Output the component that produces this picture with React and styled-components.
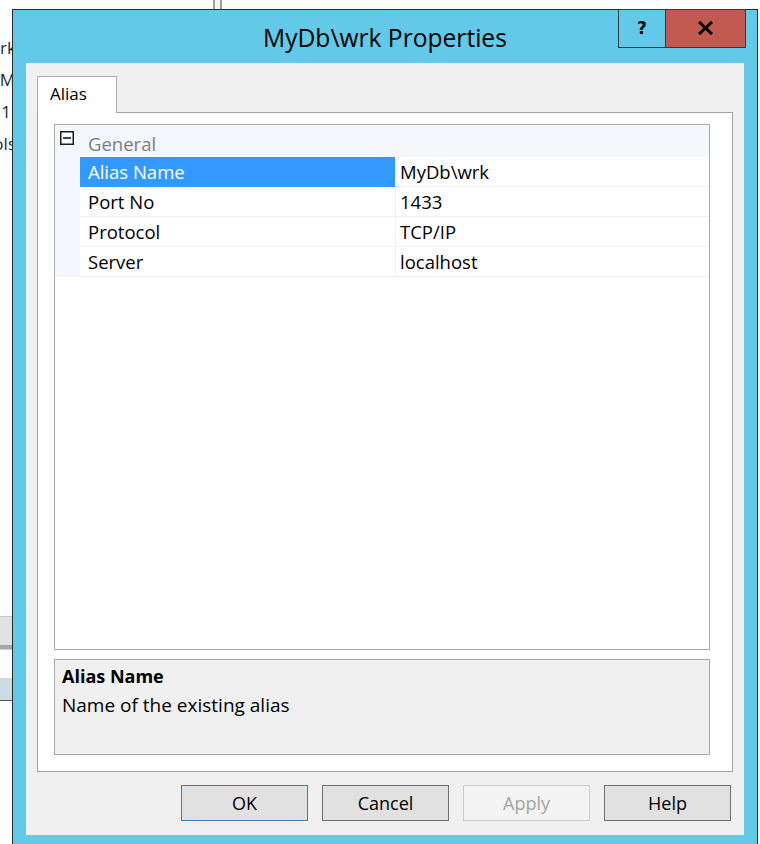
import React from "react";
import styled, { createGlobalStyle } from "styled-components";

const GlobalStyle = createGlobalStyle`
    body {
        margin: 0;
        background: #ffffff;
        font-family: "Open Sans", "Noto Sans", "Liberation Sans", sans-serif;
    }
`;

const rows = [
    { name: "Alias Name", value: "MyDb\\wrk", selected: true },
    { name: "Port No", value: "1433" },
    { name: "Protocol", value: "TCP/IP" },
    { name: "Server", value: "localhost" },
];

const buttons = [
    { label: "OK", kind: "default" },
    { label: "Cancel" },
    { label: "Apply", kind: "disabled" },
    { label: "Help" },
];

const App = () => {
    return (
        <Desktop>
            <GlobalStyle />
            <BackPane>
                <BackLabels>
                    <BackLabel $cut={-3}>Network</BackLabel>
                    <BackLabel $cut={-2}>SQLM</BackLabel>
                    <BackLabel $cut={2}>1</BackLabel>
                    <BackLabel $cut={-3}>Tools</BackLabel>
                </BackLabels>
                <BackHeader />
                <BackStatus />
            </BackPane>
            <Splitter />

            <Dialog>
                <TitleBar>
                    <Title>MyDb\wrk Properties</Title>
                    <Captions>
                        <CaptionButton>?</CaptionButton>
                        <CaptionButton $close>
                            <svg width="17" height="14" viewBox="0 0 17 14">
                                <path d="M2 1 L15 13 M15 1 L2 13" stroke="#000" strokeWidth="3" />
                            </svg>
                        </CaptionButton>
                    </Captions>
                </TitleBar>

                <Client>
                    <TabStrip>
                        <Tab>Alias</Tab>
                    </TabStrip>
                    <TabPanel>
                        <PropertyGrid>
                            <CategoryRow>
                                <Expander>
                                    <svg width="14" height="14" viewBox="0 0 14 14">
                                        <rect x="0.75" y="0.75" width="12.5" height="12.5" fill="#fff" stroke="#1a1a1a" strokeWidth="1.5" />
                                        <path d="M3 7 H11" stroke="#1a1a1a" strokeWidth="1.6" />
                                    </svg>
                                </Expander>
                                <CategoryName>General</CategoryName>
                            </CategoryRow>
                            {rows.map((r) => (
                                <PropRow key={r.name}>
                                    <Gutter />
                                    <PropName $selected={r.selected}>{r.name}</PropName>
                                    <PropValue>{r.value}</PropValue>
                                </PropRow>
                            ))}
                        </PropertyGrid>
                        <HelpBox>
                            <HelpTitle>Alias Name</HelpTitle>
                            <HelpText>Name of the existing alias</HelpText>
                        </HelpBox>
                    </TabPanel>
                    <ButtonRow>
                        {buttons.map((b) => (
                            <DialogButton key={b.label} $kind={b.kind}>
                                {b.label}
                            </DialogButton>
                        ))}
                    </ButtonRow>
                </Client>
            </Dialog>
        </Desktop>
    );
};

export default App;

const Desktop = styled.div`
    position: relative;
    width: 760px;
    height: 844px;
    overflow: hidden;
    background: #ffffff;
`;

const BackPane = styled.div`
    position: absolute;
    left: -100px;
    top: 0;
    width: 113px;
    height: 100%;
    display: flex;
    flex-direction: column;
`;

const BackLabels = styled.div`
    padding-top: 32px;
    display: flex;
    flex-direction: column;
    align-items: flex-end;
`;

const BackLabel = styled.div`
    height: 32px;
    line-height: 32px;
    font-size: 17px;
    color: #1f1f3a;
    margin-right: ${(p) => p.$cut}px;
`;

const BackHeader = styled.div`
    margin-top: 456px;
    height: 28px;
    background: #e1e1e1;
    border-top: 1px solid #c8c8c8;
    border-bottom: 4px solid #a6a6a6;
    box-shadow: 0 1px 0 #d0d0d0;
`;

const BackStatus = styled.div`
    margin-top: 29px;
    height: 21px;
    background: #c9dce3;
    border-top: 1px solid #d8d8d8;
    border-bottom: 1px solid #555;
`;

const Splitter = styled.div`
    position: absolute;
    left: 213px;
    top: 0;
    width: 5px;
    height: 9px;
    background: #f4f4f4;
    border-left: 2px solid #a0a0a0;
    border-right: 2px solid #a0a0a0;
`;

const Dialog = styled.div`
    position: absolute;
    left: 12px;
    top: 9px;
    width: 744px;
    height: 860px;
    background: #63c9e8;
    border: 1px solid #2b2b2b;
    display: flex;
    flex-direction: column;
`;

const TitleBar = styled.div`
    position: relative;
    height: 53px;
    display: flex;
    align-items: center;
    justify-content: center;
`;

const Title = styled.div`
    font-size: 24.6px;
    color: #000;
    margin-top: 1px;
`;

const Captions = styled.div`
    position: absolute;
    top: -1px;
    right: 11px;
    display: flex;
`;

const CaptionButton = styled.div`
    width: ${(p) => (p.$close ? "79px" : "46px")};
    height: 35px;
    display: flex;
    align-items: center;
    justify-content: center;
    background: ${(p) => (p.$close ? "#c35a50" : "#63c9e8")};
    border: 1px solid #2d3a40;
    border-left-width: ${(p) => (p.$close ? "0" : "1px")};
    font-family: "DejaVu Sans", sans-serif;
    font-weight: bold;
    font-size: 17px;
    color: #000;
    padding-bottom: 2px;
    box-sizing: content-box;
`;

const Client = styled.div`
    margin: 0 13px;
    height: 772px;
    background: #f0f0f0;
    padding: 13px 11px 0 11px;
    box-sizing: border-box;
    display: flex;
    flex-direction: column;
`;

const TabStrip = styled.div`
    display: flex;
    height: 36px;
    position: relative;
    z-index: 1;
`;

const Tab = styled.div`
    height: 36px;
    width: 66px;
    padding-left: 12px;
    background: #ffffff;
    border: 1px solid #adadad;
    border-bottom: none;
    box-sizing: content-box;
    font-size: 17px;
    line-height: 34px;
    color: #000;
`;

const TabPanel = styled.div`
    height: 660px;
    box-sizing: border-box;
    background: #ffffff;
    border: 1px solid #a3a3a3;
    padding: 11px 22px 16px 16px;
    display: flex;
    flex-direction: column;
`;

const PropertyGrid = styled.div`
    height: 526px;
    box-sizing: border-box;
    border: 1px solid #a8a8a8;
    background: #ffffff;
    display: flex;
    flex-direction: column;
`;

const CategoryRow = styled.div`
    height: 32px;
    display: flex;
    align-items: center;
    background: #f4f7fc;
`;

const Expander = styled.div`
    width: 25px;
    height: 14px;
    padding-left: 5px;
    box-sizing: border-box;
    display: flex;
    margin-top: -6px;
`;

const CategoryName = styled.div`
    font-size: 18.5px;
    color: #7d7d7d;
    padding-left: 8px;
    margin-top: 4px;
`;

const PropRow = styled.div`
    display: grid;
    grid-template-columns: 25px 315px 1fr;
    height: 30px;
    font-size: 18.5px;
    color: #000;
`;

const Gutter = styled.div`
    background: #f4f7fc;
`;

const PropName = styled.div`
    display: flex;
    align-items: center;
    padding-left: 8px;
    background: ${(p) => (p.$selected ? "#3399ff" : "#ffffff")};
    color: ${(p) => (p.$selected ? "#ffffff" : "#000")};
    border-bottom: 1px solid ${(p) => (p.$selected ? "#3399ff" : "#f0f0f0")};
`;

const PropValue = styled.div`
    display: flex;
    align-items: center;
    padding-left: 4px;
    border-left: 1px solid #f0f0f0;
    border-bottom: 1px solid #f0f0f0;
`;

const HelpBox = styled.div`
    margin-top: 9px;
    height: 96px;
    box-sizing: border-box;
    background: #f0f0f0;
    border: 1px solid #a8a8a8;
    padding: 3px 7px;
    color: #000;
`;

const HelpTitle = styled.div`
    font-size: 18px;
    font-weight: bold;
    line-height: 27px;
`;

const HelpText = styled.div`
    font-size: 19px;
    line-height: 30px;
`;

const ButtonRow = styled.div`
    display: flex;
    justify-content: flex-end;
    gap: 14px;
    margin-top: 13px;
    padding-right: 2px;
`;

const DialogButton = styled.div`
    width: 127px;
    height: 36px;
    box-sizing: border-box;
    display: flex;
    align-items: center;
    justify-content: center;
    font-size: 18px;
    background: ${(p) => (p.$kind === "disabled" ? "#f4f4f4" : "#e1e1e1")};
    color: ${(p) => (p.$kind === "disabled" ? "#a3a3a3" : "#000")};
    border: 1px solid
        ${(p) =>
            p.$kind === "default" ? "#3c7fb1" : p.$kind === "disabled" ? "#cdcdcd" : "#707070"};
`;
